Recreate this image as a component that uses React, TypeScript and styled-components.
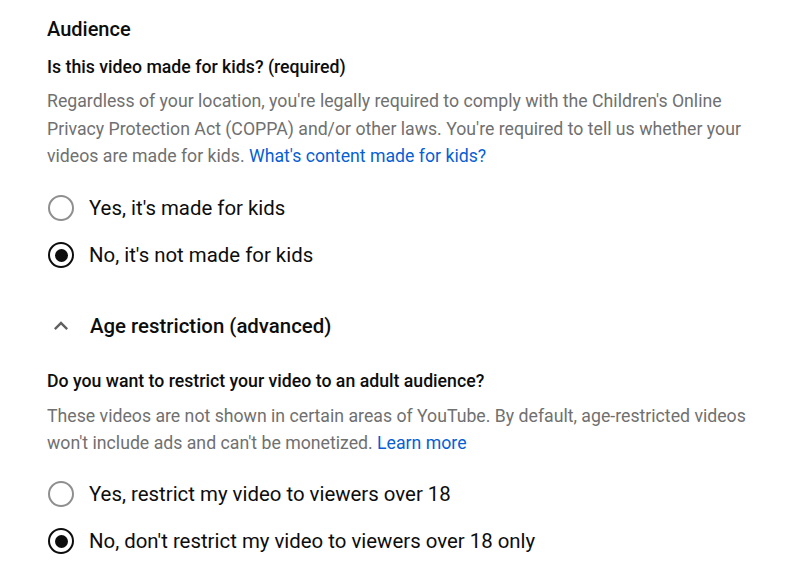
import React, { useState } from "react";
import styled, { createGlobalStyle } from "styled-components";

const GlobalStyle = createGlobalStyle`
  html, body {
    margin: 0;
    padding: 0;
    background: #ffffff;
  }
  body {
    font-family: Roboto, "Noto Sans", Arial, sans-serif;
    color: #0d0d0d;
  }
`;

const Page = styled.div`
  width: 800px;
  height: 574px;
  box-sizing: border-box;
  padding: 15px 0 0 47px;
  overflow: hidden;
`;

const Title = styled.h2`
  margin: 0;
  font-size: 20px;
  line-height: 28px;
  font-weight: 500;
  color: #0d0d0d;
`;

const Question = styled.h3<{ gap: number }>`
  margin: ${({ gap }) => gap}px 0 0 0;
  font-size: 17.7px;
  line-height: 24px;
  font-weight: 500;
  color: #0d0d0d;
`;

const Description = styled.p<{ gap: number; lineHeight: number }>`
  margin: ${({ gap }) => gap}px 0 0 0;
  width: 712px;
  font-size: 17.7px;
  line-height: ${({ lineHeight }) => lineHeight}px;
  color: #707070;
`;

const Link = styled.a`
  color: #065fd4;
  text-decoration: none;
  cursor: pointer;
`;

const RadioGroup = styled.div`
  display: flex;
  flex-direction: column;
  margin-top: 14px;
`;

const RadioRow = styled.label`
  display: flex;
  align-items: center;
  gap: 15px;
  height: 47px;
  cursor: pointer;
`;

const RadioCircle = styled.span<{ checked: boolean }>`
  width: 26px;
  height: 26px;
  box-sizing: border-box;
  border-radius: 50%;
  border: 2.5px solid ${({ checked }) => (checked ? "#0d0d0d" : "#8f8f8f")};
  display: flex;
  align-items: center;
  justify-content: center;
  margin-left: 1px;
  flex-shrink: 0;

  &::after {
    content: "";
    display: ${({ checked }) => (checked ? "block" : "none")};
    width: 13px;
    height: 13px;
    border-radius: 50%;
    background: #0d0d0d;
  }
`;

const RadioLabel = styled.span`
  font-size: 20.4px;
  line-height: 28px;
  color: #0d0d0d;
`;

const Toggle = styled.button`
  display: flex;
  align-items: center;
  gap: 15px;
  height: 48px;
  margin-top: 23px;
  padding: 0;
  border: none;
  background: none;
  cursor: pointer;
  font-family: inherit;
`;

const ToggleIcon = styled.svg`
  width: 28px;
  height: 28px;
  fill: #606060;
`;

const ToggleText = styled.span`
  font-size: 20.4px;
  line-height: 28px;
  font-weight: 500;
  color: #0d0d0d;
`;

interface RadioOption {
  value: string;
  label: string;
}

const RadioList: React.FC<{
  options: RadioOption[];
  value: string;
  onChange: (v: string) => void;
}> = ({ options, value, onChange }) => (
  <RadioGroup>
    {options.map((o) => (
      <RadioRow key={o.value} onClick={() => onChange(o.value)}>
        <RadioCircle checked={value === o.value} />
        <RadioLabel>{o.label}</RadioLabel>
      </RadioRow>
    ))}
  </RadioGroup>
);

export default function App() {
  const [forKids, setForKids] = useState("no");
  const [restrict, setRestrict] = useState("no");
  const [open, setOpen] = useState(true);

  return (
    <>
      <GlobalStyle />
      <Page>
        <Title>Audience</Title>
        <Question gap={12}>Is this video made for kids? (required)</Question>
        <Description gap={9} lineHeight={27.5}>
          Regardless of your location, you're legally required to comply with
          the Children's Online Privacy Protection Act (COPPA) and/or other
          laws. You're required to tell us whether your videos are made for
          kids. <Link>What's content made for kids?</Link>
        </Description>
        <RadioList
          value={forKids}
          onChange={setForKids}
          options={[
            { value: "yes", label: "Yes, it's made for kids" },
            { value: "no", label: "No, it's not made for kids" },
          ]}
        />

        <Toggle onClick={() => setOpen(!open)}>
          <ToggleIcon viewBox="0 0 24 24">
            <path d="M7.41 15.41 12 10.83l4.59 4.58L18 14l-6-6-6 6z" />
          </ToggleIcon>
          <ToggleText>Age restriction (advanced)</ToggleText>
        </Toggle>

        {open && (
          <>
            <Question gap={19}>
              Do you want to restrict your video to an adult audience?
            </Question>
            <Description gap={10} lineHeight={27}>
              These videos are not shown in certain areas of YouTube. By
              default, age-restricted videos won't include ads and can't be
              monetized. <Link>Learn more</Link>
            </Description>
            <RadioList
              value={restrict}
              onChange={setRestrict}
              options={[
                {
                  value: "yes",
                  label: "Yes, restrict my video to viewers over 18",
                },
                {
                  value: "no",
                  label: "No, don't restrict my video to viewers over 18 only",
                },
              ]}
            />
          </>
        )}
      </Page>
    </>
  );
}
